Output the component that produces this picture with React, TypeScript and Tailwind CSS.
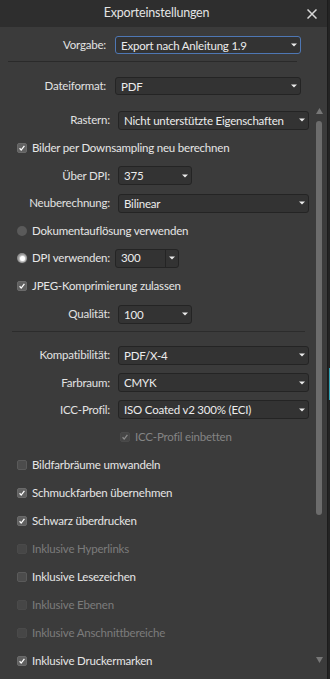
import type { ReactNode } from 'react'

function Caret() {
  return (
    <svg width="6" height="4" viewBox="0 0 6 4" className="shrink-0">
      <path d="M0 0.5h6L3 3.5z" fill="#ececec" />
    </svg>
  )
}

function Select({ value, className, focus }: { value: string; className: string; focus?: boolean }) {
  const base = focus ? 'border-[#4e77b4]' : 'border-[#242424]'
  return (
    <div className={`flex shrink-0 items-center justify-between gap-[2px] rounded-[3px] border bg-[#333333] pl-[5px] pr-[3px] text-[#ececec] ${base} ${className}`}>
      <span className="whitespace-nowrap leading-[15px]">{value}</span>
      <Caret />
    </div>
  )
}

function Checkbox({ checked, disabled }: { checked?: boolean; disabled?: boolean }) {
  const box = disabled
    ? 'border-[#4a4a4a] bg-[#464646]'
    : checked
      ? 'border-[#6a6a6a] bg-[#606060]'
      : 'border-[#5a5a5a] bg-[#4c4c4c]'
  return (
    <div className={`flex h-[10px] w-[10px] shrink-0 items-center justify-center rounded-[2px] border ${box}`}>
      {checked && (
        <svg width="10" height="10" viewBox="0 0 10 10">
          <path d="M2 5.3L4 7.6L8 2.3" fill="none" stroke={disabled ? '#8c8c8c' : '#ffffff'} strokeWidth="1.6" />
        </svg>
      )}
    </div>
  )
}

function Radio({ selected }: { selected?: boolean }) {
  return (
    <div className={`flex h-[10px] w-[10px] shrink-0 items-center justify-center rounded-full ${selected ? 'bg-[#8a8a8a]' : 'bg-[#5a5a5a]'}`}>
      {selected && <div className="h-[5px] w-[5px] rounded-full bg-white shadow-[0_0_2px_1px_#e0e0e0]" />}
    </div>
  )
}

function CheckRow({ label, checked, disabled }: { label: string; checked?: boolean; disabled?: boolean }) {
  return (
    <div className="flex h-[28px] items-center gap-[5px] pl-[17px]">
      <Checkbox checked={checked} disabled={disabled} />
      <span className={`whitespace-nowrap ${disabled ? 'text-[#7c7c7c]' : 'text-[#e6e6e6]'}`}>{label}</span>
    </div>
  )
}

function FieldRow({ label, children, tall = true }: { label: string; children: ReactNode; tall?: boolean }) {
  return (
    <div className={`flex items-center ${tall ? 'h-[28px]' : 'h-[27px]'}`}>
      <div className="w-[110px] shrink-0 whitespace-nowrap text-right">{label}</div>
      <div className="ml-[8px] flex">{children}</div>
    </div>
  )
}

export default function App() {
  return (
    <div className="flex h-[679px] w-[330px] overflow-hidden bg-[#242424] font-['Lato',sans-serif] text-[11.5px] tracking-[-0.2px] text-[#e2e2e2]">
      <div className="flex w-[327px] shrink-0 flex-col bg-[#3b3b3b]">
        {/* Title bar */}
        <div className="flex h-[27px] shrink-0 items-center bg-[#2e2e2e]">
          <div className="flex-1 pl-[10px] text-center text-[12.5px] text-[#e4e4e4]">Exporteinstellungen</div>
          <svg width="10" height="10" viewBox="0 0 10 10" className="ml-[4px] mr-[10px]">
            <path d="M0.5 0.5L9.5 9.5M9.5 0.5L0.5 9.5" stroke="#d8d8d8" strokeWidth="1.5" />
          </svg>
        </div>

        {/* Fixed header fields */}
        <div className="mt-[9px] flex items-center">
          <div className="w-[106px] text-right">Vorgabe:</div>
          <Select focus className="ml-[9px] h-[18px] w-[186px]" value="Export nach Anleitung 1.9" />
        </div>
        <div className="ml-[8px] mt-[7px] h-px w-[289px] bg-[#2a2a2a]" />
        <div className="mt-[15px] flex items-center">
          <div className="w-[106px] text-right">Dateiformat:</div>
          <Select className="ml-[9px] h-[18px] w-[186px]" value="PDF" />
        </div>

        {/* Scrolling area */}
        <div className="flex flex-1">
          <div className="w-[313px] shrink-0 pt-[11px]">
            <FieldRow label="Rastern:">
              <Select className="h-[19px] w-[191px]" value="Nicht unterstützte Eigenschaften" />
            </FieldRow>
            <CheckRow label="Bilder per Downsampling neu berechnen" checked />
            <FieldRow label="Über DPI:" tall={false}>
              <Select className="h-[19px] w-[74px]" value="375" />
            </FieldRow>
            <FieldRow label="Neuberechnung:">
              <Select className="h-[19px] w-[191px]" value="Bilinear" />
            </FieldRow>
            <div className="flex h-[27px] items-center gap-[5px] pl-[17px]">
              <Radio />
              <span className="whitespace-nowrap text-[#e6e6e6]">Dokumentauflösung verwenden</span>
            </div>
            <div className="flex h-[28px] items-center pl-[17px]">
              <Radio selected />
              <span className="ml-[5px] w-[83px] shrink-0 whitespace-nowrap text-[#e6e6e6]">DPI verwenden:</span>
              <div className="flex h-[19px] w-[64px] rounded-[3px] border border-[#242424] bg-[#333333] text-[#ececec]">
                <div className="flex w-[49px] items-center pl-[5px]">300</div>
                <div className="w-px bg-[#242424]" />
                <div className="flex flex-1 items-center justify-center">
                  <Caret />
                </div>
              </div>
            </div>
            <CheckRow label="JPEG-Komprimierung zulassen" checked />
            <FieldRow label="Qualität:">
              <Select className="h-[19px] w-[74px]" value="100" />
            </FieldRow>
            <div className="h-[13px] pt-[3px]">
              <div className="ml-[12px] h-px w-[293px] bg-[#2c2c2c]" />
            </div>
            <FieldRow label="Kompatibilität:">
              <Select className="h-[19px] w-[191px]" value="PDF/X-4" />
            </FieldRow>
            <FieldRow label="Farbraum:" tall={false}>
              <Select className="h-[19px] w-[191px]" value="CMYK" />
            </FieldRow>
            <FieldRow label="ICC-Profil:" tall={false}>
              <Select className="h-[19px] w-[191px]" value="ISO Coated v2 300% (ECI)" />
            </FieldRow>
            <div className="flex h-[28px] items-center gap-[5px] pl-[120px]">
              <Checkbox checked disabled />
              <span className="whitespace-nowrap text-[#848484]">ICC-Profil einbetten</span>
            </div>
            <CheckRow label="Bildfarbräume umwandeln" />
            <CheckRow label="Schmuckfarben übernehmen" checked />
            <CheckRow label="Schwarz überdrucken" checked />
            <CheckRow label="Inklusive Hyperlinks" disabled />
            <CheckRow label="Inklusive Lesezeichen" />
            <CheckRow label="Inklusive Ebenen" disabled />
            <CheckRow label="Inklusive Anschnittbereiche" disabled />
            <CheckRow label="Inklusive Druckermarken" checked />
          </div>

          {/* Scrollbar */}
          <div className="flex w-[14px] flex-col pl-[3px] pt-[13px] pb-[16px]">
            <svg width="7" height="6" viewBox="0 0 7 6">
              <path d="M3.5 0L7 6H0z" fill="#777777" />
            </svg>
            <div className="mt-[7px] h-[394px] w-[6px] rounded-full bg-[#6c6c6c]" />
            <div className="flex-1" />
            <svg width="7" height="6" viewBox="0 0 7 6">
              <path d="M0 0H7L3.5 6z" fill="#777777" />
            </svg>
          </div>
        </div>
      </div>

      {/* Window behind */}
      <div className="flex w-[3px] flex-col border-l border-[#1c1c1c]">
        <div className="mt-[368px] ml-px h-[32px] w-px bg-[#2ea3b5]" />
      </div>
    </div>
  )
}
